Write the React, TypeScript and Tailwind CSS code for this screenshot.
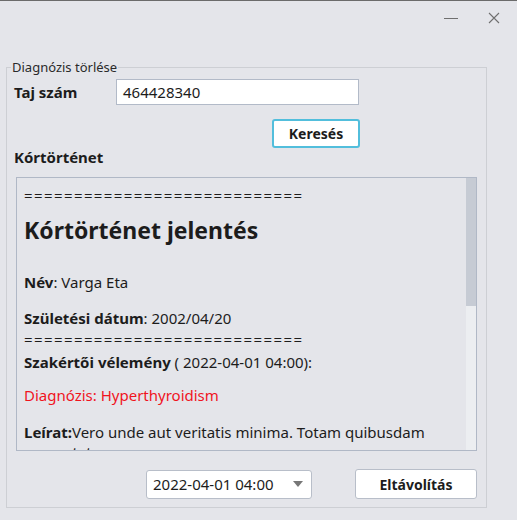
const font = { fontFamily: '"Noto Sans", "Open Sans", sans-serif' };

export default function App() {
  return (
    <div className="w-[517px] h-[520px] bg-[#e4e5ea] border-t border-[#6b6b6b] text-[#1c1c1c] overflow-hidden" style={font}>
      {/* Title bar */}
      <div className="h-[34px] flex items-center justify-end">
        <div className="w-[14px] h-px bg-[#6f6f6f] mr-[30px]"></div>
        <svg width="12" height="12" viewBox="0 0 12 12" className="mr-[17px]">
          <path d="M1 1 L11 11 M11 1 L1 11" stroke="#6f6f6f" strokeWidth="1.1" />
        </svg>
      </div>

      <fieldset className="ml-[6px] mt-[24px] w-[481px] h-[449px] border border-[#cdcfd4] pl-[7px] pr-[9px]">
        <legend className="ml-[-3px] px-[1px] text-[13px] leading-[16px] text-[#2a2a2a]">Diagnózis törlése</legend>

        {/* Taj szám row */}
        <div className="flex items-center mt-[4px]">
          <span className="w-[102px] text-[15px] font-bold">Taj szám</span>
          <div className="w-[243px] h-[26px] bg-white border border-[#b2bac8] flex items-center px-[6px] text-[15px]">
            464428340
          </div>
        </div>

        <div className="flex justify-end mt-[14px] pr-[117px]">
          <button className="w-[88px] h-[29px] rounded-[3px] bg-white border-2 border-[#52bedc] text-[14px] font-bold">
            Keresés
          </button>
        </div>

        <div className="text-[15px] font-bold mt-[-1px] leading-[20px]">Kórtörténet</div>

        {/* Scrollable report */}
        <div className="mt-[10px] ml-[2px] w-[461px] h-[274px] border border-[#b0b8c6] flex">
          <div className="flex-1 overflow-hidden pl-[7px] text-[15px] leading-[20px]">
            <div className="mt-[7px] tracking-[1.4px]">============================</div>
            <div className="mt-[8px] text-[23px] font-bold leading-[34px]">Kórtörténet jelentés</div>
            <div className="mt-[25px]"><b>Név</b>: Varga Eta</div>
            <div className="mt-[16px]"><b>Születési dátum</b>: 2002/04/20</div>
            <div className="mt-[3px] tracking-[1.4px] leading-[16px]">============================</div>
            <div className="mt-[5px]"><b>Szakértői vélemény</b> ( 2022-04-01 04:00):</div>
            <div className="mt-[13px] text-[#f0141e]">Diagnózis: Hyperthyroidism</div>
            <div className="mt-[17px]"><b>Leírat:</b>Vero unde aut veritatis minima. Totam quibusdam consectetur.</div>
          </div>
          <div className="w-[10px] flex flex-col">
            <div className="h-[128px] bg-[#c6cbd4]"></div>
            <div className="flex-1 bg-[#eceef1]"></div>
          </div>
        </div>

        {/* Bottom row */}
        <div className="flex justify-end items-center mt-[18px] gap-[43px]">
          <div className="w-[166px] h-[29px] bg-white border border-[#b8bec9] rounded-[3px] flex items-center justify-between pl-[6px] pr-[8px] text-[15px]">
            <span>2022-04-01 04:00</span>
            <svg width="10" height="6" viewBox="0 0 10 6"><path d="M0 0 L10 0 L5 6 Z" fill="#777" /></svg>
          </div>
          <button className="w-[122px] h-[30px] bg-white border border-[#b8bec9] rounded-[3px] text-[14px] font-bold">
            Eltávolítás
          </button>
        </div>
      </fieldset>
    </div>
  );
}
